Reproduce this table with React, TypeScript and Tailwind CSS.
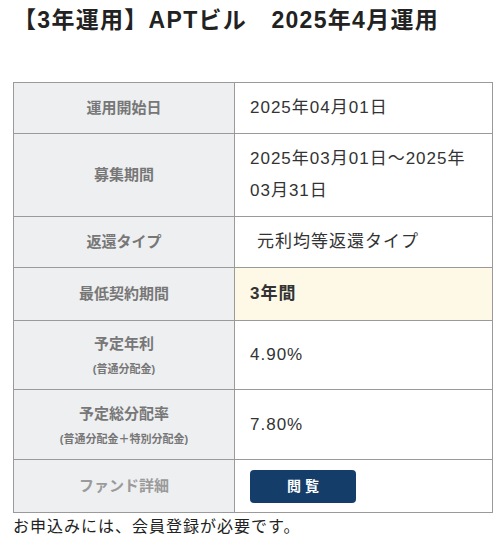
const ROWS: { label: string; sub?: string; value: React.ReactNode; h: string; highlight?: boolean; indent?: boolean }[] = [
  { label: '運用開始日', value: '2025年04月01日', h: 'h-[51px]' },
  { label: '募集期間', value: '2025年03月01日～2025年03月31日', h: 'h-[83px]' },
  { label: '返還タイプ', value: '元利均等返還タイプ', h: 'h-[51px]', indent: true },
  { label: '最低契約期間', value: <span className="font-bold">3年間</span>, h: 'h-[53px]', highlight: true },
  { label: '予定年利', sub: '(普通分配金)', value: '4.90%', h: 'h-[69px]' },
  { label: '予定総分配率', sub: '(普通分配金＋特別分配金)', value: '7.80%', h: 'h-[70px]' },
];

export default function App() {
  return (
    <div
      className="w-[500px] h-[545px] bg-white text-[#333] overflow-hidden"
      style={{ fontFamily: '"Liberation Sans", "Noto Sans CJK JP", sans-serif' }}
    >
      <h1 className="pl-[13px] pt-[3px] text-[23px] leading-[34px] font-bold text-[#222] tracking-[1.3px]">
        【3年運用】APTビル　2025年4月運用
      </h1>

      <table className="mt-[45px] ml-[13px] w-[480px] border-collapse table-fixed">
        <colgroup>
          <col className="w-[221px]" />
          <col />
        </colgroup>
        <tbody>
          {ROWS.map(row => (
            <tr key={row.label} className={row.h}>
              <th className="border border-[#9a9a9a] bg-[#eeeff1] text-[#777] font-bold text-[15px] text-center align-middle py-[9px]">
                <div className={row.sub ? 'leading-[28px]' : 'leading-[20px]'}>{row.label}</div>
                {row.sub && <div className="text-[11px] leading-[22px]">{row.sub}</div>}
              </th>
              <td
                className={`border border-[#9a9a9a] text-[17px] tracking-[1px] leading-[32px] py-[9px] pr-2 align-middle ${
                  row.highlight ? 'bg-[#fef8e7]' : 'bg-white'
                } ${row.indent ? 'pl-[22px]' : 'pl-[15px]'}`}
              >
                {row.value}
              </td>
            </tr>
          ))}
          <tr className="h-[53px]">
            <th className="border border-[#9a9a9a] bg-[#eeeff1] text-[#9a9a9a] font-bold text-[15px] text-center align-middle">
              ファンド詳細
            </th>
            <td className="border border-[#9a9a9a] pl-[15px] align-middle">
              <button className="w-[106px] h-[33px] rounded-[4px] bg-[#143e69] text-white text-[14px] font-bold">
                閲 覧
              </button>
            </td>
          </tr>
        </tbody>
      </table>

      <p className="pl-[13px] text-[16px] tracking-[1px] leading-[26px] mt-[1px] text-[#222]">
        お申込みには、会員登録が必要です。
      </p>
    </div>
  );
}
